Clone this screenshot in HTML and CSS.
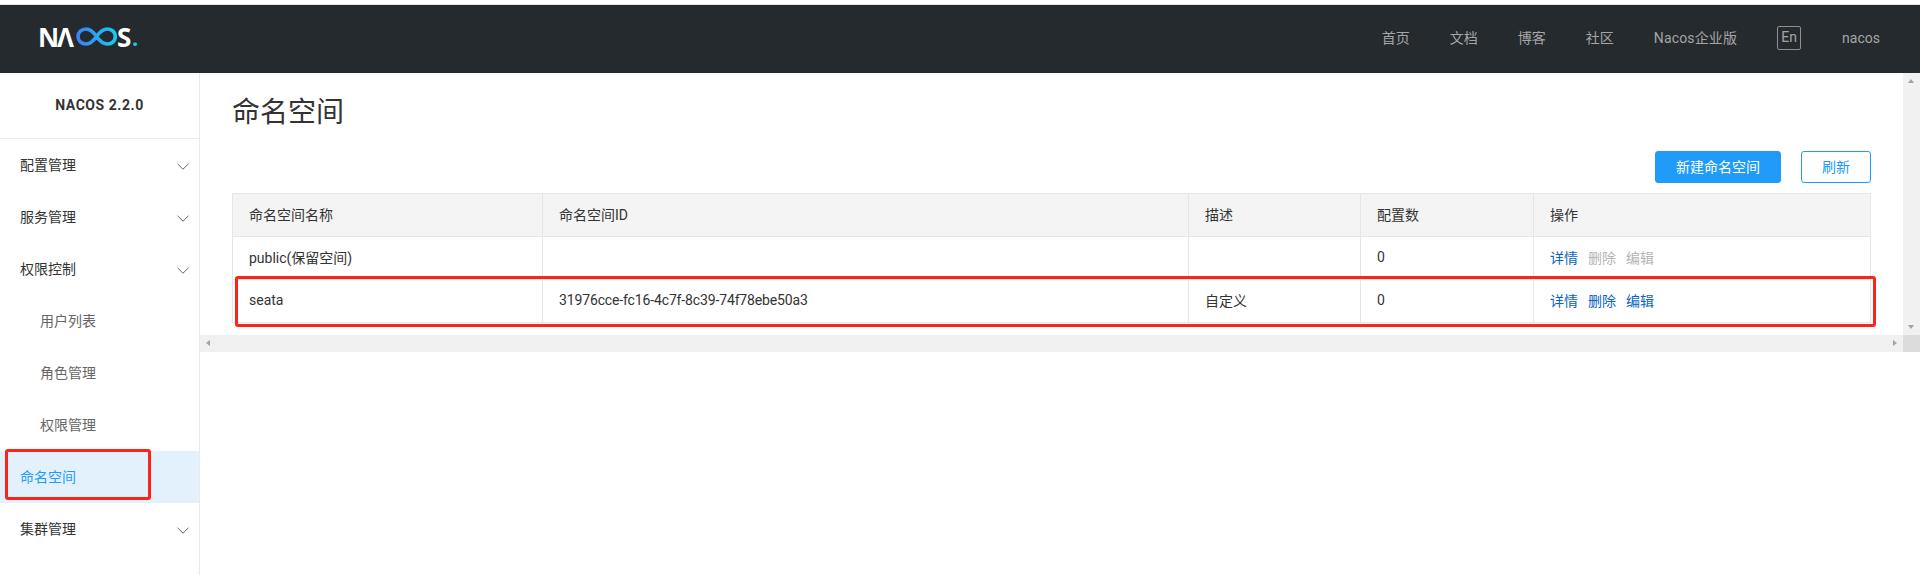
FILE: index.html
```html
<!DOCTYPE html>
<html lang="zh-CN">
<head>
<meta charset="utf-8">
<title>命名空间 - Nacos</title>
<link rel="stylesheet" href="styles.css">
</head>
<body>
<div class="page">
  <div class="top-strip"></div>
  <header class="header">
    <div class="logo" aria-label="NACOS.">
      <span class="logo-n">N</span><span class="logo-a">Λ</span>
      <svg class="logo-inf" width="41" height="19" viewBox="0 0 41 19" aria-hidden="true">
        <defs>
          <linearGradient id="inf" x1="0" y1="0" x2="1" y2="0">
            <stop offset="0" stop-color="#3b82f6"/>
            <stop offset="1" stop-color="#1cc8f0"/>
          </linearGradient>
        </defs>
        <path d="M20.5 9.5C17 4.5 14.500 2 10 2 5.500 2 2 5.200 2 9.500S5.500 17 10 17c4.500 0 7-2.500 10.500-7.500S27 2 31.500 2C36 2 39.300 5.200 39.300 9.500S36 17 31.500 17c-4.500 0-7.500-2.500-11-7.500Z" fill="none" stroke="url(#inf)" stroke-width="3.600"/>
      </svg>
      <span class="logo-s">S</span><span class="logo-dot">.</span>
    </div>
    <nav class="nav">
      <a class="nav-item">首页</a>
      <a class="nav-item">文档</a>
      <a class="nav-item">博客</a>
      <a class="nav-item">社区</a>
      <a class="nav-item nav-wide">Nacos企业版</a>
      <a class="nav-lang">En</a>
      <a class="nav-item">nacos</a>
    </nav>
  </header>
  <div class="body">
    <aside class="sidebar">
      <div class="side-title">NACOS 2.2.0</div>
      <ul class="menu">
        <li class="menu-item">配置管理<svg class="chev" width="12" height="7" viewBox="0 0 12 7"><path d="M.5.8 6 6.200 11.500.8" fill="none" stroke="#666" stroke-width="1"/></svg></li>
        <li class="menu-item">服务管理<svg class="chev" width="12" height="7" viewBox="0 0 12 7"><path d="M.5.8 6 6.200 11.500.8" fill="none" stroke="#666" stroke-width="1"/></svg></li>
        <li class="menu-item">权限控制<svg class="chev" width="12" height="7" viewBox="0 0 12 7"><path d="M.5.8 6 6.200 11.500.8" fill="none" stroke="#666" stroke-width="1"/></svg></li>
        <li class="menu-item sub">用户列表</li>
        <li class="menu-item sub">角色管理</li>
        <li class="menu-item sub">权限管理</li>
        <li class="menu-item active">命名空间</li>
        <li class="menu-item">集群管理<svg class="chev" width="12" height="7" viewBox="0 0 12 7"><path d="M.5.8 6 6.200 11.500.8" fill="none" stroke="#666" stroke-width="1"/></svg></li>
      </ul>
    </aside>
    <main class="main">
      <div class="pane">
        <div class="pane-row">
          <div class="content">
            <h1 class="title">命名空间</h1>
            <div class="actions">
              <button class="btn primary">新建命名空间</button>
              <button class="btn outline">刷新</button>
            </div>
            <table class="grid">
              <colgroup>
                <col class="c1"><col class="c2"><col class="c3"><col class="c4"><col class="c5">
              </colgroup>
              <thead>
                <tr><th>命名空间名称</th><th>命名空间ID</th><th>描述</th><th>配置数</th><th>操作</th></tr>
              </thead>
              <tbody>
                <tr>
                  <td>public(保留空间)</td><td></td><td></td><td>0</td>
                  <td><a class="link">详情</a><a class="link off">删除</a><a class="link off">编辑</a></td>
                </tr>
                <tr>
                  <td>seata</td><td class="ns-id">31976cce-fc16-4c7f-8c39-74f78ebe50a3</td><td>自定义</td><td>0</td>
                  <td><a class="link">详情</a><a class="link">删除</a><a class="link">编辑</a></td>
                </tr>
              </tbody>
            </table>
          </div>
          <div class="vbar"><i class="arr up"></i><i class="arr down"></i></div>
        </div>
        <div class="hbar">
          <div class="htrack"><i class="arr left"></i><i class="arr right"></i></div>
          <div class="corner"></div>
        </div>
      </div>
    </main>
  </div>
  <div class="mark mark-row"></div>
  <div class="mark mark-menu"></div>
</div>
</body>
</html>
```
FILE: styles.css
```css
* { box-sizing: border-box; }
html, body { margin: 0; padding: 0; height: 100%; background: #fff; overflow: hidden; }
body { font-family: Roboto, "Noto Sans CJK SC", "Liberation Sans", sans-serif; font-size: 14px; color: #333; }
.page { position: relative; width: 1920px; height: 575px; display: flex; flex-direction: column; }
.top-strip { height: 5px; background: #fff; box-shadow: inset 0 -1px 0 #e4e4e4; }

.header { height: 68px; background: #252a2f; display: flex; align-items: center; justify-content: space-between; padding: 0 40px 0 38px; }
.logo { display: flex; align-items: center; color: #fff; font-family: "Open Sans", "Liberation Sans", sans-serif; font-size: 26px; line-height: 26px; margin-top: -5px; }
.logo-n { width: 19px; font-weight: 700; }
.logo-a { width: 19px; font-weight: 700; }
.logo-inf { display: block; }
.logo-s { width: 15px; font-weight: 700; }
.logo-dot { color: #1cc8f0; font-weight: 700; font-size: 22px; }
.nav { display: flex; align-items: center; gap: 40px; margin-top: -2px; color: #a5a5a5; }
.nav-item { line-height: 24px; }
.nav-wide { letter-spacing: .15px; }
.nav-lang { width: 24px; height: 24px; line-height: 20px; text-align: center; border: 1px solid #8d8f91; border-radius: 2px; margin-right: 1px; }

.body { flex: 1; display: flex; min-height: 0; }
.sidebar { width: 200px; border-right: 1px solid #eaeaea; }
.side-title { height: 66px; line-height: 65px; text-align: center; font-weight: 700; border-bottom: 1px solid #eaeaea; letter-spacing: .55px; }
.menu { list-style: none; margin: 0; padding: 0; }
.menu-item { height: 52px; line-height: 52px; padding-left: 20px; padding-right: 10px; display: flex; align-items: center; justify-content: space-between; }
.menu-item.sub { padding-left: 40px; color: #666; }
.menu-item.active { background: #e3f1fd; color: #209bfa; }
.chev { display: block; margin-top: 3px; }

.main { flex: 1; min-width: 0; }
.pane { height: 279px; display: flex; flex-direction: column; }
.pane-row { flex: 1; display: flex; min-height: 0; }
.content { flex: 1; padding: 0 32px; min-width: 0; }
.title { margin: 0; padding-top: 19px; height: 78px; font-size: 28px; font-weight: 400; line-height: 42px; color: #333; }
.actions { display: flex; justify-content: flex-end; gap: 20px; height: 42px; }
.btn { height: 32px; font: inherit; line-height: 30px; border-radius: 3px; padding: 0; }
.btn.primary { width: 126px; background: #209bfa; border: 1px solid #209bfa; color: #fff; }
.btn.outline { width: 70px; background: #fff; border: 1px solid #209bfa; color: #209bfa; }

.grid { border-collapse: collapse; table-layout: fixed; width: 1638px; }
.c1 { width: 310px; } .c2 { width: 646px; } .c3 { width: 172px; } .c4 { width: 173px; } .c5 { width: 337px; }
.grid th, .grid td { height: 43px; padding: 0 16px 2px; border: 1px solid #e6e6e6; text-align: left; font-weight: 400; vertical-align: middle; }
.grid th { background: #f4f4f4; }
.ns-id { letter-spacing: -.14px; }
.link { color: #0b63c5; margin-right: 10px; }
.link.off { color: #b5b5b5; }

.vbar { width: 17px; background: #f1f1f1; position: relative; }
.hbar { height: 17px; display: flex; }
.htrack { flex: 1; background: #f0f0f0; position: relative; }
.corner { width: 17px; background: #dcdcdc; }
.arr { position: absolute; width: 0; height: 0; border-style: solid; border-color: transparent; }
.arr.up { top: 6px; left: 5px; border-width: 0 3.5px 4px; border-bottom-color: #a3a3a3; }
.arr.down { bottom: 6px; left: 5px; border-width: 4px 3.500px 0; border-top-color: #a3a3a3; }
.arr.left { left: 6px; top: 5px; border-width: 3.5px 4px 3.5px 0; border-right-color: #a3a3a3; }
.arr.right { right: 6px; top: 5px; border-width: 3.5px 0 3.5px 4px; border-left-color: #a3a3a3; }

.mark { position: absolute; border: 3px solid #fb2418; border-radius: 3px; }
.mark-row { left: 235px; top: 276px; width: 1641px; height: 51px; }
.mark-menu { left: 5px; top: 449px; width: 146px; height: 51px; }
```
